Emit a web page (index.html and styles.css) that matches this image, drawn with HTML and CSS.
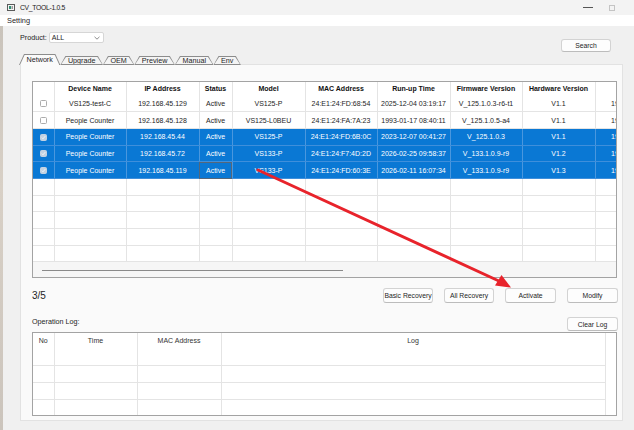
FILE: index.html
```html
<!DOCTYPE html>
<html lang="en">
<head>
    <meta charset="UTF-8">
    <title>CV_TOOL-1.0.5</title>
    <link rel="stylesheet" href="styles.css">
</head>
<body>
    <div class="titlebar">
        <svg class="app-icon" width="8" height="7" viewBox="0 0 8 7">
            <rect x="0.5" y="0.5" width="7" height="6" fill="#f4f4f4" stroke="#5a5a5a"/>
            <rect x="2" y="2" width="2" height="3" fill="#2f8f74"/>
            <rect x="4.5" y="2" width="1.5" height="3" fill="#9a9a9a"/>
        </svg>
        <span class="title">CV_TOOL-1.0.5</span>
        <div class="win-btns">
            <span class="win-min"></span>
            <span class="win-max"></span>
        </div>
    </div>
    <div class="menubar"><span>Setting</span></div>

    <div class="desk">
        <div class="strip"></div>
        <div class="main">
            <div class="toolbar">
                <div class="product">
                    <span>Product:</span>
                    <div class="combo">
                        <span>ALL</span>
                        <svg width="6" height="4" viewBox="0 0 6 4"><polyline points="0.5,0.8 3,3.2 5.5,0.8" fill="none" stroke="#707070" stroke-width="0.8"/></svg>
                    </div>
                </div>
                <button class="btn btn-search">Search</button>
            </div>

            <div class="tabs">
                <div class="tab active"><span class="tab-face">Network</span></div>
                <div class="tab"><span class="tab-face">Upgrade</span></div>
                <div class="tab"><span class="tab-face">OEM</span></div>
                <div class="tab"><span class="tab-face">Preview</span></div>
                <div class="tab"><span class="tab-face">Manual</span></div>
                <div class="tab"><span class="tab-face">Env</span></div>
            </div>

            <div class="pane">
                <div class="grid-box">
                    <div class="grid-scroll">
                        <table class="grid">
                            <colgroup>
                                <col style="width:21px"><col style="width:72px"><col style="width:73px">
                                <col style="width:33px"><col style="width:73px"><col style="width:72px">
                                <col style="width:73px"><col style="width:72px"><col style="width:73px">
                                <col style="width:73px">
                            </colgroup>
                            <thead>
                                <tr>
                                    <th></th><th>Device Name</th><th>IP Address</th><th>Status</th><th>Model</th>
                                    <th>MAC Address</th><th>Run-up Time</th><th>Firmware Version</th><th>Hardware Version</th><th>Gateway</th>
                                </tr>
                            </thead>
                            <tbody id="deviceRows"></tbody>
                        </table>
                    </div>
                    <div class="hscroll"><div class="hscroll-thumb"></div></div>
                </div>

                <div class="actions">
                    <span class="count">3/5</span>
                    <button class="btn">Basic Recovery</button>
                    <button class="btn">All Recovery</button>
                    <button class="btn">Activate</button>
                    <button class="btn">Modify</button>
                </div>

                <div class="log-head">
                    <span class="log-label">Operation Log:</span>
                    <button class="btn">Clear Log</button>
                </div>

                <div class="log-box">
                    <table class="log">
                        <colgroup>
                            <col style="width:21px"><col style="width:83px"><col style="width:84px"><col style="width:384px">
                        </colgroup>
                        <thead>
                            <tr><th>No</th><th>Time</th><th>MAC Address</th><th>Log</th></tr>
                        </thead>
                        <tbody>
                            <tr><td></td><td></td><td></td><td></td></tr>
                            <tr><td></td><td></td><td></td><td></td></tr>
                            <tr><td></td><td></td><td></td><td></td></tr>
                        </tbody>
                    </table>
                </div>
            </div>
        </div>
    </div>

    <svg class="arrow" width="634" height="430" viewBox="0 0 634 430">
        <line x1="258" y1="170" x2="500" y2="281.5" stroke="#e8232b" stroke-width="3" stroke-linecap="round"/>
        <polygon points="511,287.5 501.5,275 495,285.5" fill="#e8232b"/>
    </svg>

    <script>
        // device list
        const devices = [
            { name: "VS125-test-C", ip: "192.168.45.129", model: "VS125-P", mac: "24:E1:24:FD:68:54", time: "2025-12-04 03:19:17", fw: "V_125.1.0.3-r6-t1", hw: "V1.1" },
            { name: "People Counter", ip: "192.168.45.128", model: "VS125-L0BEU", mac: "24:E1:24:FA:7A:23", time: "1993-01-17 08:40:11", fw: "V_125.1.0.5-a4", hw: "V1.1" },
            { name: "People Counter", ip: "192.168.45.44", model: "VS125-P", mac: "24:E1:24:FD:6B:0C", time: "2023-12-07 00:41:27", fw: "V_125.1.0.3", hw: "V1.1", sel: true },
            { name: "People Counter", ip: "192.168.45.72", model: "VS133-P", mac: "24:E1:24:F7:4D:2D", time: "2026-02-25 09:58:37", fw: "V_133.1.0.9-r9", hw: "V1.2", sel: true },
            { name: "People Counter", ip: "192.168.45.119", model: "VS133-P", mac: "24:E1:24:FD:60:3E", time: "2026-02-11 16:07:34", fw: "V_133.1.0.9-r9", hw: "V1.3", sel: true, focus: true }
        ];

        const check = '<svg width="5" height="5" viewBox="0 0 5 5"><polyline points="0.8,2.6 2,3.8 4.2,1.2" fill="none" stroke="#f4f7fa" stroke-width="0.9"/></svg>';

        function renderRows() {
            let html = devices.map(d => `
                <tr class="${d.sel ? 'selected' : ''}">
                    <td><span class="chk ${d.sel ? 'on' : ''}">${d.sel ? check : ''}</span></td>
                    <td>${d.name}</td>
                    <td>${d.ip}</td>
                    <td class="${d.focus ? 'focus' : ''}">Active</td>
                    <td>${d.model}</td>
                    <td>${d.mac}</td>
                    <td>${d.time}</td>
                    <td>${d.fw}</td>
                    <td>${d.hw}</td>
                    <td>192.168.45.1</td>
                </tr>
            `).join('');
            for (let i = 0; i < 5; i++) {
                html += '<tr>' + '<td></td>'.repeat(10) + '</tr>';
            }
            document.getElementById('deviceRows').innerHTML = html;
        }

        renderRows();
    </script>
</body>
</html>
```

FILE: styles.css
```css
body {
    margin: 0;
    width: 634px;
    height: 430px;
    overflow: hidden;
    position: relative;
    background: #f0f0f0;
    font-family: "Liberation Sans", Arial, sans-serif;
    color: #1e1e1e;
}

/* window chrome */
.titlebar {
    height: 15px;
    display: flex;
    align-items: center;
    padding-left: 7px;
    background: #f3f3f3;
}

.app-icon {
    margin-right: 5px;
}

.title {
    font-size: 6.8px;
    letter-spacing: -0.3px;
    color: #222;
}

.win-btns {
    margin-left: auto;
    margin-right: 19px;
    display: flex;
    align-items: center;
    gap: 16px;
}

.win-min {
    width: 10px;
    height: 1px;
    background: #555;
}

.win-max {
    width: 6px;
    height: 6px;
    border: 1px solid #c4c4c4;
    box-sizing: border-box;
}

.menubar {
    height: 11px;
    line-height: 11px;
    background: #fff;
    padding-left: 7px;
    font-size: 7.4px;
}

.desk {
    display: flex;
    height: 404px;
}

.strip {
    width: 3px;
    flex-shrink: 0;
    background: linear-gradient(#c9c3bb, #d8d0c6 40%, #cbc4bc);
}

.main {
    width: 631px;
    box-sizing: border-box;
    min-width: 0;
    display: flex;
    flex-direction: column;
    padding: 0 11px 0 17px;
}

/* product + search */
.toolbar {
    height: 28px;
    box-sizing: border-box;
    padding-top: 6px;
    display: flex;
    justify-content: space-between;
    align-items: flex-start;
}

.product {
    display: flex;
    align-items: center;
    gap: 2px;
    height: 11px;
    font-size: 7.2px;
}

.combo {
    width: 55px;
    height: 11px;
    box-sizing: border-box;
    border: 1px solid #d6d6d6;
    border-radius: 2px;
    background: #fff;
    display: flex;
    align-items: center;
    justify-content: space-between;
    padding: 0 3px 0 2px;
    font-size: 7px;
}

.btn {
    font-family: inherit;
    font-size: 6.8px;
    white-space: nowrap;
    color: #1e1e1e;
    background: #fdfdfd;
    border: 1px solid #d3d3d3;
    border-bottom-color: #bcbcbc;
    border-radius: 3px;
    padding: 0;
    width: 51px;
    height: 15px;
}

.btn-search {
    margin-top: 7px;
    margin-right: 12px;
    width: 50px;
    height: 13px;
}

/* tabs */
.tabs {
    display: flex;
    align-items: flex-end;
    height: 11px;
    margin: 0 0 -1px -1px;
    position: relative;
    z-index: 1;
}

.tab {
    height: 9px;
    box-sizing: border-box;
    padding: 1px 1px 0;
    background: #8c8c8c;
    clip-path: polygon(5px 0, calc(100% - 5px) 0, 100% 100%, 0 100%);
}

.tab-face {
    display: block;
    height: calc(100% - 1px);
    padding: 0 6.5px;
    background: #f4f4f4;
    clip-path: polygon(4.6px 0, calc(100% - 4.6px) 0, 100% 100%, 0 100%);
    font-size: 7.2px;
    line-height: 8px;
}

.tab.active {
    height: 11px;
}

.tab.active .tab-face {
    height: 100%;
    background: #fafafa;
    line-height: 10px;
}

/* tab pane */
.pane {
    width: 603px;
    box-sizing: border-box;
    flex: 1;
    margin-bottom: 9px;
    background: #fafafa;
    border: 1px solid #e2e2e2;
    padding: 16px 5px 4px 11px;
    display: flex;
    flex-direction: column;
}

.grid-box {
    width: 585px;
    height: 197px;
    flex-shrink: 0;
    box-sizing: border-box;
    border: 1px solid #a3a3a3;
    background: #fff;
    display: flex;
    flex-direction: column;
    overflow: hidden;
}

.grid-scroll {
    flex: 1;
    overflow: hidden;
}

table {
    border-collapse: collapse;
    table-layout: fixed;
}

.grid {
    width: 635px;
}

.grid th,
.grid td {
    padding: 0;
    font-size: 7px;
    text-align: center;
    white-space: nowrap;
    overflow: hidden;
    border-right: 1px solid #e4e4e4;
}

.grid th {
    height: 13.6px;
    font-weight: bold;
    color: #111;
}

.grid td {
    height: 15.7px;
    border-bottom: 1px solid #e4e4e4;
}

.grid tr.selected td {
    background: #0a78d4;
    color: #fff;
    border-right-color: #4a97de;
    border-bottom-color: #3f8fdb;
}

.grid td.focus {
    outline: 1px solid #55677a;
    outline-offset: -1px;
}

.chk {
    display: inline-flex;
    align-items: center;
    justify-content: center;
    width: 7px;
    height: 7px;
    box-sizing: border-box;
    border: 1px solid #acacac;
    border-radius: 1.5px;
    background: #fff;
    vertical-align: middle;
}

.chk.on {
    background: #c3d2e2;
    border-color: #c3d2e2;
}

.hscroll {
    height: 15px;
    flex-shrink: 0;
    box-sizing: border-box;
    padding: 8px 0 0 9px;
    background: #f6f6f6;
}

.hscroll-thumb {
    width: 301px;
    height: 1px;
    background: #8a8a8a;
}

/* buttons under the grid */
.actions {
    height: 15px;
    margin-top: 10px;
    margin-right: -1px;
    display: flex;
    align-items: center;
    gap: 11px;
}

.actions .btn:first-of-type,
.actions .btn:nth-of-type(2) {
    width: 50px;
}

.count {
    margin-right: auto;
    font-size: 10px;
}

/* operation log */
.log-head {
    height: 14px;
    margin-top: 14px;
    margin-right: -1px;
    display: flex;
    justify-content: space-between;
    align-items: flex-start;
}

.log-label {
    font-size: 7.2px;
    line-height: 10px;
}

.log-head .btn {
    height: 14px;
}

.log-box {
    width: 585px;
    height: 84px;
    flex-shrink: 0;
    margin-top: 1px;
    box-sizing: border-box;
    border: 1px solid #a3a3a3;
    background: #fff;
    overflow: hidden;
}

.log {
    width: 572px;
}

.log th,
.log td {
    padding: 0;
    border-right: 1px solid #e4e4e4;
    border-bottom: 1px solid #e4e4e4;
    font-size: 7px;
}

.log th {
    height: 28px;
    padding-top: 4px;
    vertical-align: top;
    font-weight: normal;
    color: #333;
}

.log td {
    height: 16px;
}

.arrow {
    position: absolute;
    top: 0;
    left: 0;
    pointer-events: none;
}
```
